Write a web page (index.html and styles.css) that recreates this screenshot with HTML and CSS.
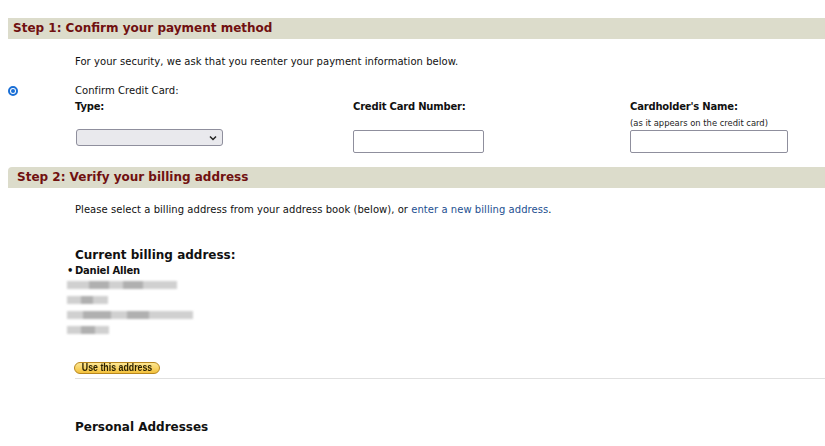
FILE: index.html
```html
<!DOCTYPE html>
<html>
<head>
<meta charset="utf-8">
<link rel="stylesheet" href="styles.css">
</head>
<body>
<div class="page">
  <div class="step-bar step1">Step 1: Confirm your payment method</div>
  <p class="intro">For your security, we ask that you reenter your payment information below.</p>
  <div class="pay-row">
    <div class="radio-col"><span class="radio"></span></div>
    <div class="pay-form">
      <div class="confirm">Confirm Credit Card:</div>
      <div class="fields">
        <div class="field">
          <div class="label">Type:</div>
          <div class="sublabel">&nbsp;</div>
          <div class="select"><svg width="8" height="6" viewBox="0 0 8 6"><path d="M1 1.5 L4 4.5 L7 1.5" fill="none" stroke="#222" stroke-width="1.5"/></svg></div>
        </div>
        <div class="field">
          <div class="label">Credit Card Number:</div>
          <div class="sublabel">&nbsp;</div>
          <div class="input num"></div>
        </div>
        <div class="field">
          <div class="label">Cardholder's Name:</div>
          <div class="sublabel">(as it appears on the credit card)</div>
          <div class="input name"></div>
        </div>
      </div>
    </div>
  </div>
  <div class="step-bar step2">Step 2: Verify your billing address</div>
  <p class="intro2">Please select a billing address from your address book (below), or <a href="#">enter a new billing address</a>.</p>
  <div class="billing">
    <h2 class="current">Current billing address:</h2>
    <div class="name-line"><span class="bullet">•</span>Daniel Allen</div>
    <div class="blur-line"><span class="px" style="width:22px"></span><span class="px d" style="width:20px"></span><span class="px" style="width:14px"></span><span class="px d" style="width:20px"></span><span class="px" style="width:12px"></span><span class="px" style="width:22px"></span></div>
    <div class="blur-line"><span class="px" style="width:14px"></span><span class="px d" style="width:12px"></span><span class="px" style="width:15px"></span></div>
    <div class="blur-line"><span class="px" style="width:16px"></span><span class="px d" style="width:28px"></span><span class="px" style="width:16px"></span><span class="px d" style="width:22px"></span><span class="px" style="width:14px"></span><span class="px" style="width:30px"></span></div>
    <div class="blur-line"><span class="px" style="width:14px"></span><span class="px d" style="width:14px"></span><span class="px" style="width:14px"></span></div>
    <div class="btn-row"><span class="btn"><span class="btn-text">Use this address</span></span></div>
    <div class="rule"></div>
    <h3 class="personal">Personal Addresses</h3>
  </div>
</div>
</body>
</html>
```
FILE: styles.css
```css
* { box-sizing: border-box; }
html, body { margin: 0; padding: 0; background: #fff; }
body { font-family: "DejaVu Sans", Verdana, sans-serif; font-size: 10px; letter-spacing: 0.05px; color: #111; }
.page { padding-top: 18px; width: 825px; overflow: hidden; }
.step-bar {
  margin-left: 8px;
  background: #dcdccb;
  color: #701010;
  font-weight: bold;
  font-size: 12px;
  letter-spacing: 0;
  line-height: 21px;
  height: 21px;
  padding-left: 5px;
}
.step2 { padding-left: 9px; border-top-left-radius: 4px; }
.intro { margin: 16px 0 0 75px; line-height: 13px; }
.pay-row { display: flex; margin-top: 16px; }
.radio-col { width: 75px; padding-left: 8px; padding-top: 2px; }
.radio {
  display: block; width: 10px; height: 10px; border-radius: 50%;
  border: 2px solid #1a6fd6; position: relative;
}
.radio::after {
  content: ""; position: absolute; left: 1px; top: 1px; width: 4px; height: 4px;
  border-radius: 50%; background: #1a6fd6;
}
.pay-form { flex: 1; }
.confirm { line-height: 13px; }
.fields { display: flex; }
.field { display: flex; flex-direction: column; }
.field:nth-child(1) { width: 278px; }
.field:nth-child(2) { width: 277px; }
.label { font-weight: bold; line-height: 15px; margin-top: 2px; letter-spacing: -0.2px; }
.sublabel { font-size: 8.4px; letter-spacing: 0; line-height: 10px; margin-top: 4px; color: #222; height: 12px; }
.select {
  width: 147px; height: 17px; margin-left: 1px; margin-top: -1px;
  background: #e9e9ed; border: 1px solid #8f8f9d; border-radius: 3px;
  display: flex; align-items: center; justify-content: flex-end; padding-right: 5px;
}
.input { height: 23px; border: 1px solid #8f8f9d; border-radius: 2px; background: #fff; }
.input.num { width: 131px; }
.input.name { width: 158px; }
.step2 { margin-top: 14px; }
.intro2 { margin: 15px 0 0 75px; line-height: 13px; }
.intro2 a { color: #1d4f91; text-decoration: none; }
.billing { padding-left: 75px; }
.current { font-size: 12px; margin: 30px 0 0; line-height: 18px; font-weight: bold; letter-spacing: 0; }
.name-line { font-weight: bold; line-height: 14px; position: relative; letter-spacing: -0.25px; }
.bullet { position: absolute; left: -8px; top: 0; }
.blur-line { display: flex; height: 15px; margin-left: -8px; padding-top: 3px; filter: blur(1.2px); }
.px { height: 8px; background: #d0d0d0; }
.px.d { background: #b0b0b0; }
.btn-row { margin-top: 24px; height: 12px; }
.btn {
  display: flex; justify-content: center; align-items: center;
  width: 86px; height: 12px; margin-left: -1px;
  border: 1px solid #b8871e; border-radius: 6px;
  background: linear-gradient(#fde792, #f3c13c);
  overflow: hidden;
}
.btn-text {
  display: inline-block;
  font-family: "Liberation Sans", Arial, sans-serif;
  font-weight: bold; font-size: 10px; line-height: 10px; letter-spacing: 0;
  color: #2a2000; white-space: nowrap;
  transform: scaleX(0.88);
}
.rule { height: 1px; background: #e0e0e0; margin-top: 4px; }
.personal { font-size: 12px; font-weight: bold; margin: 40px 0 0; line-height: 16px; letter-spacing: 0; }
```
